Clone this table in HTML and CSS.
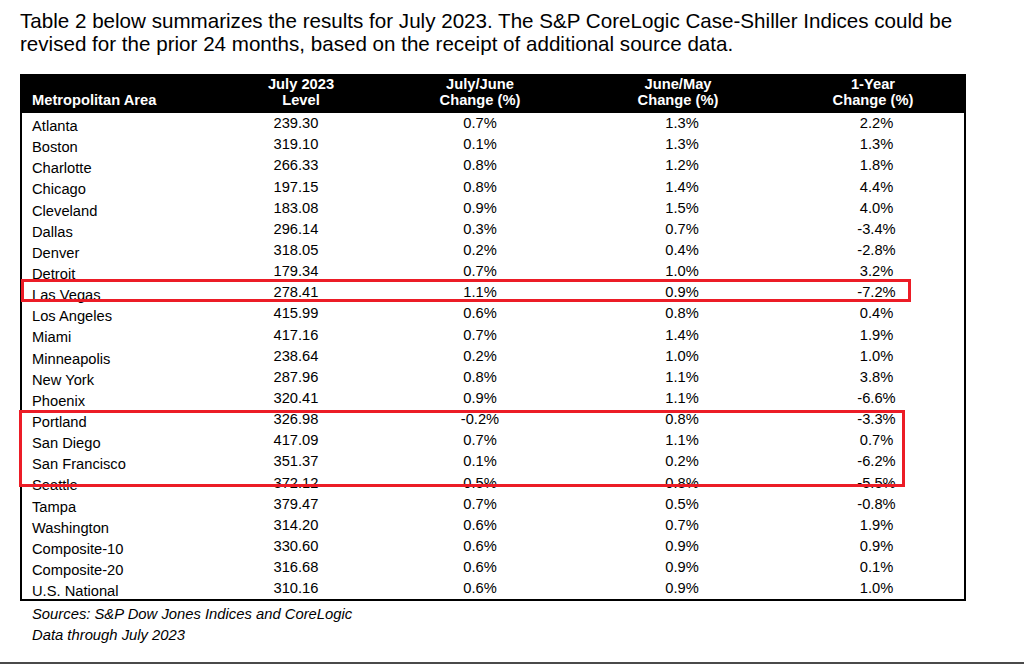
FILE: index.html
```html
<!DOCTYPE html>
<html lang="en">
<head>
<meta charset="utf-8">
<title>S&amp;P CoreLogic Case-Shiller - Table 2</title>
<link rel="stylesheet" href="styles.css">
</head>
<body>
<p class="intro">Table 2 below summarizes the results for July 2023. The S&amp;P CoreLogic Case-Shiller Indices could be revised for the prior 24 months, based on the receipt of additional source data.</p>

<div class="table-wrap">
  <table class="results">
    <colgroup>
      <col class="c-name">
      <col class="c-level">
      <col class="c-mom">
      <col class="c-prev">
      <col class="c-yoy">
    </colgroup>
    <thead>
      <tr>
        <th class="h-name">Metropolitan Area</th>
        <th class="h-level">July 2023<br>Level</th>
        <th>July/June<br>Change (%)</th>
        <th class="h-prev">June/May<br>Change (%)</th>
        <th class="h-yoy">1-Year<br>Change (%)</th>
      </tr>
    </thead>
    <tbody>
      <tr><td class="name">Atlanta</td><td class="lvl">239.30</td><td>0.7%</td><td>1.3%</td><td class="yoy">2.2%</td></tr>
      <tr><td class="name">Boston</td><td class="lvl">319.10</td><td>0.1%</td><td>1.3%</td><td class="yoy">1.3%</td></tr>
      <tr><td class="name">Charlotte</td><td class="lvl">266.33</td><td>0.8%</td><td>1.2%</td><td class="yoy">1.8%</td></tr>
      <tr><td class="name">Chicago</td><td class="lvl">197.15</td><td>0.8%</td><td>1.4%</td><td class="yoy">4.4%</td></tr>
      <tr><td class="name">Cleveland</td><td class="lvl">183.08</td><td>0.9%</td><td>1.5%</td><td class="yoy">4.0%</td></tr>
      <tr><td class="name">Dallas</td><td class="lvl">296.14</td><td>0.3%</td><td>0.7%</td><td class="yoy">-3.4%</td></tr>
      <tr><td class="name">Denver</td><td class="lvl">318.05</td><td>0.2%</td><td>0.4%</td><td class="yoy">-2.8%</td></tr>
      <tr><td class="name">Detroit</td><td class="lvl">179.34</td><td>0.7%</td><td>1.0%</td><td class="yoy">3.2%</td></tr>
      <tr><td class="name">Las Vegas</td><td class="lvl">278.41</td><td>1.1%</td><td>0.9%</td><td class="yoy">-7.2%</td></tr>
      <tr><td class="name">Los Angeles</td><td class="lvl">415.99</td><td>0.6%</td><td>0.8%</td><td class="yoy">0.4%</td></tr>
      <tr><td class="name">Miami</td><td class="lvl">417.16</td><td>0.7%</td><td>1.4%</td><td class="yoy">1.9%</td></tr>
      <tr><td class="name">Minneapolis</td><td class="lvl">238.64</td><td>0.2%</td><td>1.0%</td><td class="yoy">1.0%</td></tr>
      <tr><td class="name">New York</td><td class="lvl">287.96</td><td>0.8%</td><td>1.1%</td><td class="yoy">3.8%</td></tr>
      <tr><td class="name">Phoenix</td><td class="lvl">320.41</td><td>0.9%</td><td>1.1%</td><td class="yoy">-6.6%</td></tr>
      <tr><td class="name">Portland</td><td class="lvl">326.98</td><td>-0.2%</td><td>0.8%</td><td class="yoy">-3.3%</td></tr>
      <tr><td class="name">San Diego</td><td class="lvl">417.09</td><td>0.7%</td><td>1.1%</td><td class="yoy">0.7%</td></tr>
      <tr><td class="name">San Francisco</td><td class="lvl">351.37</td><td>0.1%</td><td>0.2%</td><td class="yoy">-6.2%</td></tr>
      <tr><td class="name">Seattle</td><td class="lvl">372.12</td><td>0.5%</td><td>0.8%</td><td class="yoy">-5.5%</td></tr>
      <tr><td class="name">Tampa</td><td class="lvl">379.47</td><td>0.7%</td><td>0.5%</td><td class="yoy">-0.8%</td></tr>
      <tr><td class="name">Washington</td><td class="lvl">314.20</td><td>0.6%</td><td>0.7%</td><td class="yoy">1.9%</td></tr>
      <tr><td class="name">Composite-10</td><td class="lvl">330.60</td><td>0.6%</td><td>0.9%</td><td class="yoy">0.9%</td></tr>
      <tr><td class="name">Composite-20</td><td class="lvl">316.68</td><td>0.6%</td><td>0.9%</td><td class="yoy">0.1%</td></tr>
      <tr><td class="name">U.S. National</td><td class="lvl">310.16</td><td>0.6%</td><td>0.9%</td><td class="yoy">1.0%</td></tr>
    </tbody>
  </table>
  <div class="highlight highlight-vegas"></div>
  <div class="highlight highlight-west"></div>
</div>

<div class="sources">
  <p>Sources: S&amp;P Dow Jones Indices and CoreLogic</p>
  <p>Data through July 2023</p>
</div>

<div class="page-rule"></div>
</body>
</html>
```

FILE: styles.css
```css
html, body {
  margin: 0;
  padding: 0;
  background: #ffffff;
  color: #000000;
  font-family: "Liberation Sans", Arial, sans-serif;
}

.intro {
  margin: 8.6px 0 0 20px;
  width: 990px;
  font-size: 20.6px;
  line-height: 23px;
}

.table-wrap {
  position: relative;
  width: 946px;
  margin: 19.4px 0 0 20px;
}

.results {
  width: 946px;
  table-layout: fixed;
  border-collapse: separate;
  border-spacing: 0;
  border: 2px solid #000000;
  font-size: 14.7px;
}

.c-name { width: 194px; }
.c-level { width: 160px; }
.c-mom { width: 208px; }
.c-prev { width: 196px; }
.c-yoy { width: 184px; }

.results thead tr {
  height: 36.7px;
}

.results th {
  background: #000000;
  color: #ffffff;
  font-weight: bold;
  text-align: center;
  vertical-align: bottom;
  line-height: 16.5px;
  padding: 0 0 4px 0;
}

.results th.h-name {
  text-align: left;
  padding-left: 10px;
}

.results th.h-level {
  padding-left: 10px;
}

.results th.h-prev {
  padding-right: 8px;
}

.results th.h-yoy {
  padding-left: 2px;
}

.results tbody tr {
  height: 21.15px;
}

.results td {
  padding: 2.2px 0 0 0;
  line-height: 16px;
  text-align: center;
  vertical-align: top;
  white-space: nowrap;
}

.results td.name {
  text-align: left;
  padding: 5px 0 0 10px;
}

.results td.yoy {
  padding-left: 9px;
}

.highlight {
  position: absolute;
  border: 3px solid #ec1c26;
  box-sizing: border-box;
  pointer-events: none;
}

.highlight-vegas {
  left: 1px;
  top: 205px;
  width: 890px;
  height: 23px;
}

.highlight-west {
  left: -1px;
  top: 336px;
  width: 886px;
  height: 77px;
}

.sources {
  margin: 2.6px 0 0 32px;
  font-size: 14.8px;
  font-style: italic;
  line-height: 21.6px;
}

.sources p {
  margin: 0;
}

.page-rule {
  margin-top: 14.6px;
  height: 1px;
  border-top: 2px solid #4a4a4a;
  background: #cfcfcf;
}
```
